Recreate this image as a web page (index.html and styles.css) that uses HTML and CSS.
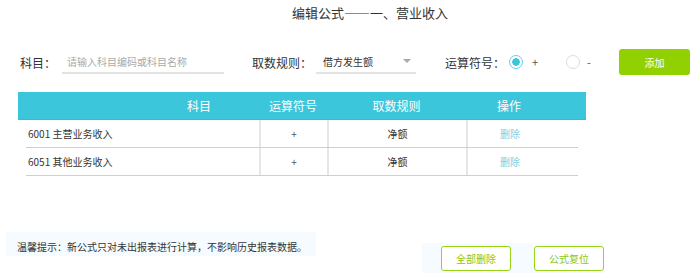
FILE: index.html
```html
<!DOCTYPE html>
<html lang="zh-CN">
<head>
   <meta charset="UTF-8">
   <meta name="viewport" content="width=device-width, initial-scale=1.0">
   <title>编辑公式</title>

   <link rel="stylesheet" href="styles.css">
</head>
<body>

<div class="page">
	<h1 class="title">编辑公式——一、营业收入</h1>

	<div class="form-row">
		<span class="field-label label-subject">科目：</span>
		<input class="text-input" type="text" placeholder="请输入科目编码或科目名称">

		<span class="field-label label-rule">取数规则：</span>
		<div class="select">
			<span>借方发生额</span>
			<span class="select-arrow"></span>
		</div>

		<span class="field-label label-op">运算符号：</span>
		<span class="radio is-checked"></span>
		<span class="radio-text plus">+</span>
		<span class="radio"></span>
		<span class="radio-text minus">-</span>

		<button class="btn-add">添加</button>
	</div>

	<div class="table">
		<div class="table-head">
			<div class="cell col-1 head-subject">科目</div>
			<div class="cell col-2">运算符号</div>
			<div class="cell col-3">取数规则</div>
			<div class="cell col-4">操作</div>
		</div>
		<div class="table-row">
			<div class="cell col-1 subject">6001 主营业务收入</div>
			<div class="cell col-2 sign">+</div>
			<div class="cell col-3">净额</div>
			<div class="cell col-4"><a class="link-del" href="#">删除</a></div>
		</div>
		<div class="table-row">
			<div class="cell col-1 subject">6051 其他业务收入</div>
			<div class="cell col-2 sign">+</div>
			<div class="cell col-3">净额</div>
			<div class="cell col-4"><a class="link-del" href="#">删除</a></div>
		</div>
	</div>

	<div class="footer">
		<div class="tip">温馨提示：新公式只对未出报表进行计算，不影响历史报表数据。</div>
		<div class="actions">
			<button class="btn-outline">全部删除</button>
			<button class="btn-outline">公式复位</button>
		</div>
	</div>
</div>

</body>
</html>
```

FILE: styles.css
```css
*,
::before,
::after {
    padding: 0;
    margin: 0;
    box-sizing: border-box;
}

html,
body {
    height: 100%;
    font-family: "Noto Sans CJK SC", "Liberation Sans", sans-serif;
    background-color: #fff;
    color: #333;
}

.page {
    width: 700px;
    height: 278px;
    overflow: hidden;
}

/* title */
.title {
    padding: 3px 0 0 292px;
    font-size: 13px;
    font-weight: normal;
    line-height: 20px;
    color: #333;
}

/* form */
.form-row {
    display: flex;
    align-items: center;
    height: 26px;
    margin-top: 26px;
    padding-left: 20px;
}

.field-label {
    font-size: 12px;
    color: #333;
}

.label-subject {
    width: 42px;
}

.label-rule {
    width: 64px;
    margin-left: 28px;
}

.label-op {
    width: 64px;
    margin-left: 29px;
}

.text-input {
    width: 162px;
    height: 24px;
    margin-top: 8px;
    padding-left: 5px;
    border: none;
    border-bottom: 2px solid #e3e3e3;
    outline: none;
    font-family: inherit;
    font-size: 10px;
    color: #333;
    transform: translateY(-4px);
}

.text-input::placeholder {
    color: #aaa;
}

.select {
    display: flex;
    justify-content: space-between;
    align-items: center;
    width: 100px;
    height: 24px;
    margin-top: 8px;
    padding: 0 5px 0 7px;
    border-bottom: 2px solid #e3e3e3;
    font-size: 10px;
    color: #333;
    transform: translateY(-4px);
}

.select-arrow {
    width: 0;
    height: 0;
    border-left: 4px solid transparent;
    border-right: 4px solid transparent;
    border-top: 4px solid #aaa;
}

.radio {
    display: inline-block;
    width: 14px;
    height: 14px;
    border: 1px solid #ddd;
    border-radius: 50%;
}

.radio.is-checked {
    border: 1.5px solid #66d0e6;
    background: radial-gradient(circle, #3cc6db 0, #3cc6db 3.5px, #fff 4px);
}

.radio-text {
    font-size: 11px;
    color: #555;
}

.plus {
    width: 43px;
    padding-left: 9px;
}

.minus {
    width: 39px;
    padding-left: 7px;
}

.btn-add {
    width: 71px;
    height: 26px;
    border: none;
    border-radius: 3px;
    background: #91d102;
    color: #fff;
    font-family: inherit;
    font-size: 10px;
}

/* table */
.table {
    width: 568px;
    margin: 17px 0 0 18px;
}

.table-head {
    display: flex;
    height: 28px;
    align-items: center;
    background: #3cc6db;
    border-bottom: 1px solid #36bcd0;
    color: #fff;
    font-size: 12px;
}

.cell {
    text-align: center;
}

.col-1 {
    width: 241px;
}

.col-2 {
    width: 68px;
}

.col-3 {
    width: 139px;
}

.col-4 {
    width: 86px;
}

.head-subject {
    padding-left: 169px;
    text-align: left;
}

.table-row {
    display: flex;
    width: 552px;
    height: 28px;
    margin-left: 8px;
    border-bottom: 1px solid #cfcfcf;
    font-size: 10px;
    color: #333;
}

.table-row .cell {
    display: flex;
    align-items: center;
    justify-content: center;
}

.table-row .col-1 {
    width: 233px;
    padding-left: 2px;
    justify-content: flex-start;
}

.table-row .col-2,
.table-row .col-3,
.table-row .col-4 {
    border-left: 2px solid #e6e6e6;
}

.table-row .col-4 {
    width: 86px;
    margin-right: auto;
}

.sign {
    color: #555;
}

.link-del {
    color: #7dcfe2;
    text-decoration: none;
}

/* footer */
.footer {
    display: flex;
    align-items: flex-start;
    margin-top: 56px;
    padding-left: 6px;
}

.tip {
    width: 310px;
    height: 24px;
    padding: 8px 0 0 11px;
    background: #f5fbfe;
    font-size: 10px;
    line-height: 14px;
    color: #333;
}

.actions {
    display: flex;
    gap: 23px;
    width: 182px;
    height: 30px;
    margin: 11px 0 0 106px;
    padding: 3px 0 0 19px;
    background: #f5fbfe;
}

.btn-outline {
    width: 70px;
    height: 25px;
    border: 1.5px solid #9ad417;
    border-radius: 3px;
    background: #fff;
    color: #8cc612;
    font-family: inherit;
    font-size: 10px;
}
```
